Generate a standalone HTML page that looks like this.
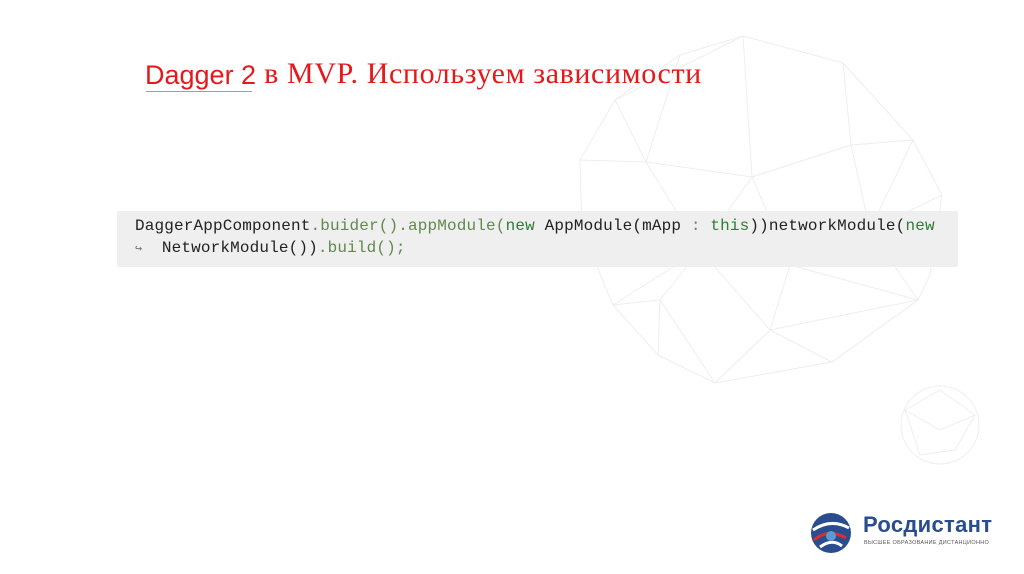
<!DOCTYPE html>
<html><head><meta charset="utf-8"><style>
html,body{margin:0;padding:0;width:1024px;height:574px;background:#fff;overflow:hidden;position:relative;font-family:"Liberation Sans",sans-serif}
svg.bg{position:absolute;left:0;top:0}
.title{position:absolute;left:145px;top:58px;font-size:27px;color:#e3191b;white-space:nowrap;font-family:"Liberation Serif",serif}
.title .r{font-size:30px;letter-spacing:0.6px;position:relative;top:-1px}
.title .s{font-family:"Liberation Sans",sans-serif}
.ul{position:absolute;left:146px;top:91px;width:106px;height:1px;background:#9aa0a6}
.code{position:absolute;left:117px;top:211px;width:841px;height:56px;background:#efefef}
.code pre{margin:0;position:absolute;left:18px;top:4px;font-family:"Liberation Mono",monospace;font-size:16px;line-height:22px;letter-spacing:0.15px;color:#222}
.g{color:#5f8a4c}.k{color:#2e7d32}
.arr{color:#777;font-size:12px}
</style></head><body>
<svg class="bg" width="1024" height="574" stroke="#eeeeee" fill="none" stroke-width="1">
<polygon points="743,36 843,63 913,140 942,195 930,275 918,300 832,362 715,383 658,355 613,305 582,230 580,160 615,100 680,55"/>
<polyline points="743,36 752,177 851,145 843,63"/>
<polyline points="680,55 646,162 752,177 700,250 646,162 580,160"/>
<polyline points="851,145 913,140 870,230 851,145 752,177 790,265 870,230 942,195"/>
<polyline points="700,250 790,265 770,330 700,250 613,305 660,300 700,250"/>
<polyline points="790,265 918,300 870,230"/>
<polyline points="770,330 832,362 918,300 770,330 715,383 660,300 658,355"/>
<polyline points="646,162 615,100 743,36"/>
<circle cx="940" cy="425" r="39"/>
<polyline points="905,410 940,390 975,415 955,450 920,455 905,410 940,430 975,415 M940,390 940,430 955,450 M940,430 920,455"/>
</svg>
<div class="title"><span class="s">Dagger 2</span><span class="r"> в MVP. Используем зависимости</span></div>
<div class="ul"></div>
<div class="code"><pre>DaggerAppComponent<span class="g">.buider().appModule(</span><span class="k">new</span> AppModule(mApp <span class="g">:</span> <span class="k">this</span>))networkModule(<span class="k">new</span>
<span class="arr">↪</span>  NetworkModule())<span class="g">.build();</span></pre></div>
<svg style="position:absolute;left:808px;top:510px" width="46" height="46" viewBox="0 0 46 46">
<circle cx="23" cy="23" r="20" fill="#2a4d8f"/>
<path d="M5 20 Q23 8 41 18" stroke="#fff" stroke-width="3" fill="none"/>
<path d="M6 30 Q20 18 38 28" stroke="#d9302c" stroke-width="3" fill="none"/>
<path d="M12 37 Q24 28 34 36" stroke="#fff" stroke-width="3" fill="none"/>
<circle cx="23" cy="26" r="5" fill="#5a9bd5"/>
</svg>
<div style="position:absolute;left:863px;top:512px;font-size:22px;font-weight:bold;color:#2a4d8f;letter-spacing:0.3px">Росдистант</div>
<div style="position:absolute;left:864px;top:540px;font-size:5.5px;color:#555;letter-spacing:0.3px">ВЫСШЕЕ ОБРАЗОВАНИЕ ДИСТАНЦИОННО</div>
</body></html>
